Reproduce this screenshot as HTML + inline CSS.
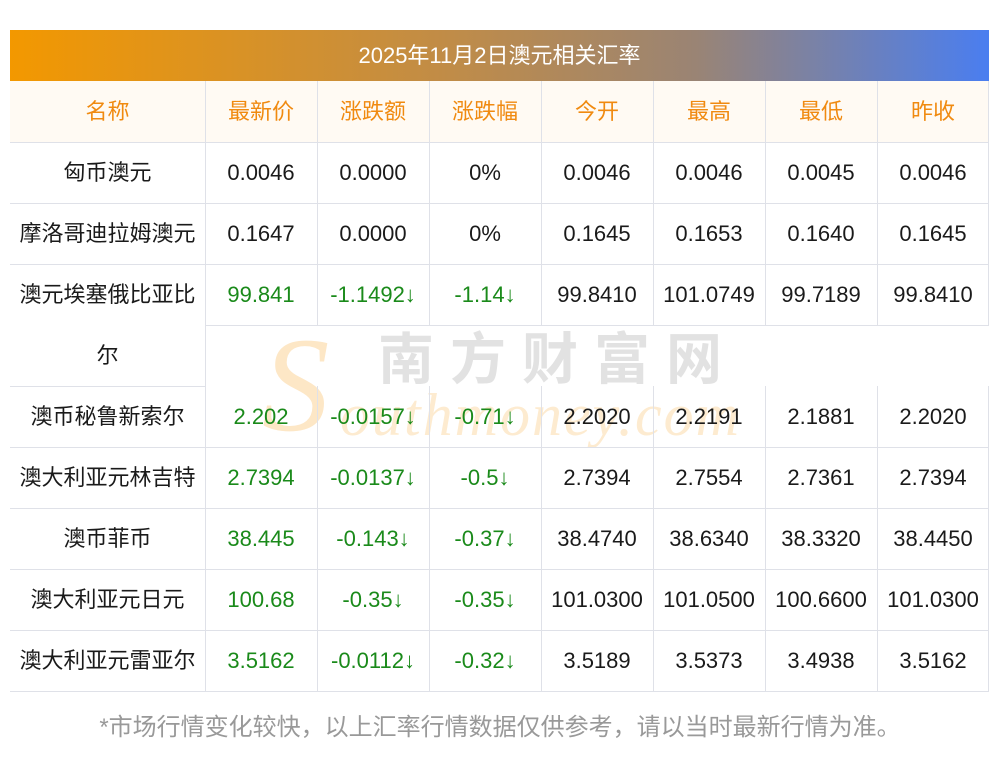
<!DOCTYPE html>
<html><head><meta charset="utf-8"><style>
body{margin:0;width:1000px;height:757px;background:#fff;position:relative;overflow:hidden;font-family:"Liberation Sans","Noto Sans CJK SC",sans-serif}
.t{position:absolute;left:10px;top:30px;width:979px;height:51px;background:linear-gradient(90deg,#f39800,#c08c48 45%,#9a8474 70%,#4a7ef0);color:#fff;font-size:22px;line-height:51px;text-align:center}
.hd{position:absolute;left:10px;top:81px;width:979px;height:61px;background:#fffaf3}
.r{position:absolute;left:10px;display:flex;height:61px;line-height:61px;font-size:22px;color:#1a1a1a}
.r div{text-align:center;width:112px;white-space:nowrap}
.r div:first-child{width:195px}
.h div{color:#f08a10}
.g{color:#1a8a1a}
.hl{position:absolute;height:1px;background:#dfe1e8}
.vl{position:absolute;width:1px;background:#dfe1e8}
.wm{position:absolute;left:378px;top:325px;font-size:56px;color:#e2e2e2;letter-spacing:16px;line-height:62px;font-family:"Noto Sans CJK SC",sans-serif;font-weight:bold}
.wm2{position:absolute;left:340px;top:382px;font-size:60px;font-style:italic;color:#fdebd0;font-family:"Liberation Serif",serif;letter-spacing:2px;line-height:66px}
.S{position:absolute;left:262px;top:318px;font-size:135px;font-style:italic;color:#fde7c6;font-family:"Liberation Serif",serif;line-height:135px}
.f{position:absolute;left:0;width:1000px;top:707px;text-align:center;font-size:24px;color:#999}
</style></head><body>
<div class="S">S</div>
<div class="wm2">outhmoney.com</div>
<div class="wm">南方财富网</div>
<div class="t">2025年11月2日澳元相关汇率</div>
<div class="hd"></div>
<div class="r h" style="top:81px"><div>名称</div><div>最新价</div><div>涨跌额</div><div>涨跌幅</div><div>今开</div><div>最高</div><div>最低</div><div>昨收</div></div>
<div class="r" style="top:142px"><div>匈币澳元</div><div>0.0046</div><div>0.0000</div><div>0%</div><div>0.0046</div><div>0.0046</div><div>0.0045</div><div>0.0046</div></div>
<div class="r" style="top:203px"><div>摩洛哥迪拉姆澳元</div><div>0.1647</div><div>0.0000</div><div>0%</div><div>0.1645</div><div>0.1653</div><div>0.1640</div><div>0.1645</div></div>
<div class="r" style="top:264px"><div>澳元埃塞俄比亚比</div><div class="g">99.841</div><div class="g">-1.1492↓</div><div class="g">-1.14↓</div><div>99.8410</div><div>101.0749</div><div>99.7189</div><div>99.8410</div></div>
<div class="r" style="top:325px"><div>尔</div></div>
<div class="r" style="top:386px"><div>澳币秘鲁新索尔</div><div class="g">2.202</div><div class="g">-0.0157↓</div><div class="g">-0.71↓</div><div>2.2020</div><div>2.2191</div><div>2.1881</div><div>2.2020</div></div>
<div class="r" style="top:447px"><div>澳大利亚元林吉特</div><div class="g">2.7394</div><div class="g">-0.0137↓</div><div class="g">-0.5↓</div><div>2.7394</div><div>2.7554</div><div>2.7361</div><div>2.7394</div></div>
<div class="r" style="top:508px"><div>澳币菲币</div><div class="g">38.445</div><div class="g">-0.143↓</div><div class="g">-0.37↓</div><div>38.4740</div><div>38.6340</div><div>38.3320</div><div>38.4450</div></div>
<div class="r" style="top:569px"><div>澳大利亚元日元</div><div class="g">100.68</div><div class="g">-0.35↓</div><div class="g">-0.35↓</div><div>101.0300</div><div>101.0500</div><div>100.6600</div><div>101.0300</div></div>
<div class="r" style="top:630px"><div>澳大利亚元雷亚尔</div><div class="g">3.5162</div><div class="g">-0.0112↓</div><div class="g">-0.32↓</div><div>3.5189</div><div>3.5373</div><div>3.4938</div><div>3.5162</div></div>
<div class="hl" style="left:10px;width:979px;top:142px"></div>
<div class="hl" style="left:10px;width:979px;top:203px"></div>
<div class="hl" style="left:10px;width:979px;top:264px"></div>
<div class="hl" style="left:205px;width:784px;top:325px"></div>
<div class="hl" style="left:10px;width:195px;top:386px"></div>
<div class="hl" style="left:10px;width:979px;top:447px"></div>
<div class="hl" style="left:10px;width:979px;top:508px"></div>
<div class="hl" style="left:10px;width:979px;top:569px"></div>
<div class="hl" style="left:10px;width:979px;top:630px"></div>
<div class="hl" style="left:10px;width:979px;top:691px"></div>
<div class="vl" style="left:205px;top:81px;height:610px"></div>
<div class="vl" style="left:317px;top:81px;height:244px"></div><div class="vl" style="left:317px;top:386px;height:305px"></div>
<div class="vl" style="left:429px;top:81px;height:244px"></div><div class="vl" style="left:429px;top:386px;height:305px"></div>
<div class="vl" style="left:541px;top:81px;height:244px"></div><div class="vl" style="left:541px;top:386px;height:305px"></div>
<div class="vl" style="left:653px;top:81px;height:244px"></div><div class="vl" style="left:653px;top:386px;height:305px"></div>
<div class="vl" style="left:765px;top:81px;height:244px"></div><div class="vl" style="left:765px;top:386px;height:305px"></div>
<div class="vl" style="left:877px;top:81px;height:244px"></div><div class="vl" style="left:877px;top:386px;height:305px"></div>
<div class="vl" style="left:988px;top:81px;height:244px"></div><div class="vl" style="left:988px;top:386px;height:305px"></div>
<div class="f">*市场行情变化较快，以上汇率行情数据仅供参考，请以当时最新行情为准。</div>
</body></html>
